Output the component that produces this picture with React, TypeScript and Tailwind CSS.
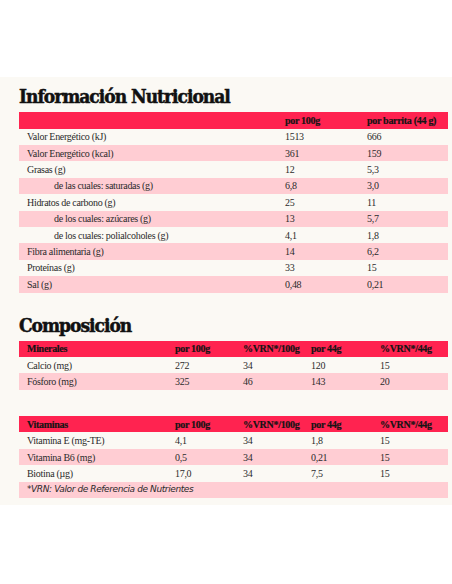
import React from "react";

const RED = "bg-[#ff2350]";
const PINK = "bg-[#ffcdd3]";

type Row = { label: string; cells: string[]; indent?: boolean };

const nutri: Row[] = [
  { label: "Valor Energético (kJ)", cells: ["1513", "666"] },
  { label: "Valor Energético (kcal)", cells: ["361", "159"] },
  { label: "Grasas (g)", cells: ["12", "5,3"] },
  { label: "de las cuales: saturadas (g)", cells: ["6,8", "3,0"], indent: true },
  { label: "Hidratos de carbono (g)", cells: ["25", "11"] },
  { label: "de los cuales: azúcares (g)", cells: ["13", "5,7"], indent: true },
  { label: "de los cuales: polialcoholes (g)", cells: ["4,1", "1,8"], indent: true },
  { label: "Fibra alimentaria (g)", cells: ["14", "6,2"] },
  { label: "Proteínas (g)", cells: ["33", "15"] },
  { label: "Sal (g)", cells: ["0,48", "0,21"] },
];

const minerales: Row[] = [
  { label: "Calcio (mg)", cells: ["272", "34", "120", "15"] },
  { label: "Fósforo (mg)", cells: ["325", "46", "143", "20"] },
];

const vitaminas: Row[] = [
  { label: "Vitamina E (mg-TE)", cells: ["4,1", "34", "1,8", "15"] },
  { label: "Vitamina B6 (mg)", cells: ["0,5", "34", "0,21", "15"] },
  { label: "Biotina (µg)", cells: ["17,0", "34", "7,5", "15"] },
];

const serif = "font-['Liberation_Serif',serif]";
const heading =
  "font-['DejaVu_Serif_Condensed','DejaVu_Serif',serif] [font-stretch:condensed] font-bold text-[19px] tracking-[-1px] text-[#111] leading-[24px] [-webkit-text-stroke:0.5px_#111]";

function Header({ cols, titles }: { cols: string; titles: string[] }) {
  return (
    <div className={`grid ${cols} h-[16.6px] items-center ${RED} ${serif} font-bold text-[10px] tracking-[-0.3px] text-[#141414] [-webkit-text-stroke:0.2px_#141414]`}>
      {titles.map((t, i) => (
        <div key={i} className={i === 0 ? "pl-2" : ""}>
          {t}
        </div>
      ))}
    </div>
  );
}

function Rows({ cols, rows }: { cols: string; rows: Row[] }) {
  return (
    <>
      {rows.map((r, i) => (
        <div
          key={r.label}
          className={`grid ${cols} h-[16.4px] items-center ${serif} text-[10px] tracking-[-0.3px] text-[#2b2b2b] ${
            i % 2 === 1 ? PINK : ""
          }`}
        >
          <div className={r.indent ? "pl-[35px]" : "pl-2"}>{r.label}</div>
          {r.cells.map((c, j) => (
            <div key={j}>{c}</div>
          ))}
        </div>
      ))}
    </>
  );
}

export default function App() {
  const c3 = "grid-cols-[266px_82px_1fr]";
  const c5 = "grid-cols-[156px_68px_68px_69px_1fr]";
  return (
    <div className="bg-white h-[584px] pt-[77px]">
      <div className="bg-[#fbf9f4] pl-[19px] pr-[4px] pt-[7px] pb-[7px]">
        <h2 className={`${heading} mb-[4px]`}>Información Nutricional</h2>
        <div>
          <Header cols={c3} titles={["", "por 100g", "por barrita (44 g)"]} />
          <Rows cols={c3} rows={nutri} />
        </div>

        <h2 className={`${heading} mt-[20px] mb-[4px]`}>Composición</h2>
        <div>
          <Header cols={c5} titles={["Minerales", "por 100g", "%VRN*/100g", "por 44g", "%VRN*/44g"]} />
          <Rows cols={c5} rows={minerales} />
        </div>

        <div className="mt-[26px]">
          <Header cols={c5} titles={["Vitaminas", "por 100g", "%VRN*/100g", "por 44g", "%VRN*/44g"]} />
          <Rows cols={c5} rows={vitaminas} />
          <div className={`h-[16.4px] flex items-center pl-2 ${PINK} font-['DejaVu_Sans',sans-serif] italic text-[9px] tracking-[-0.4px] text-[#2b2b2b]`}>
            *VRN: Valor de Referencia de Nutrientes
          </div>
        </div>
      </div>
    </div>
  );
}
